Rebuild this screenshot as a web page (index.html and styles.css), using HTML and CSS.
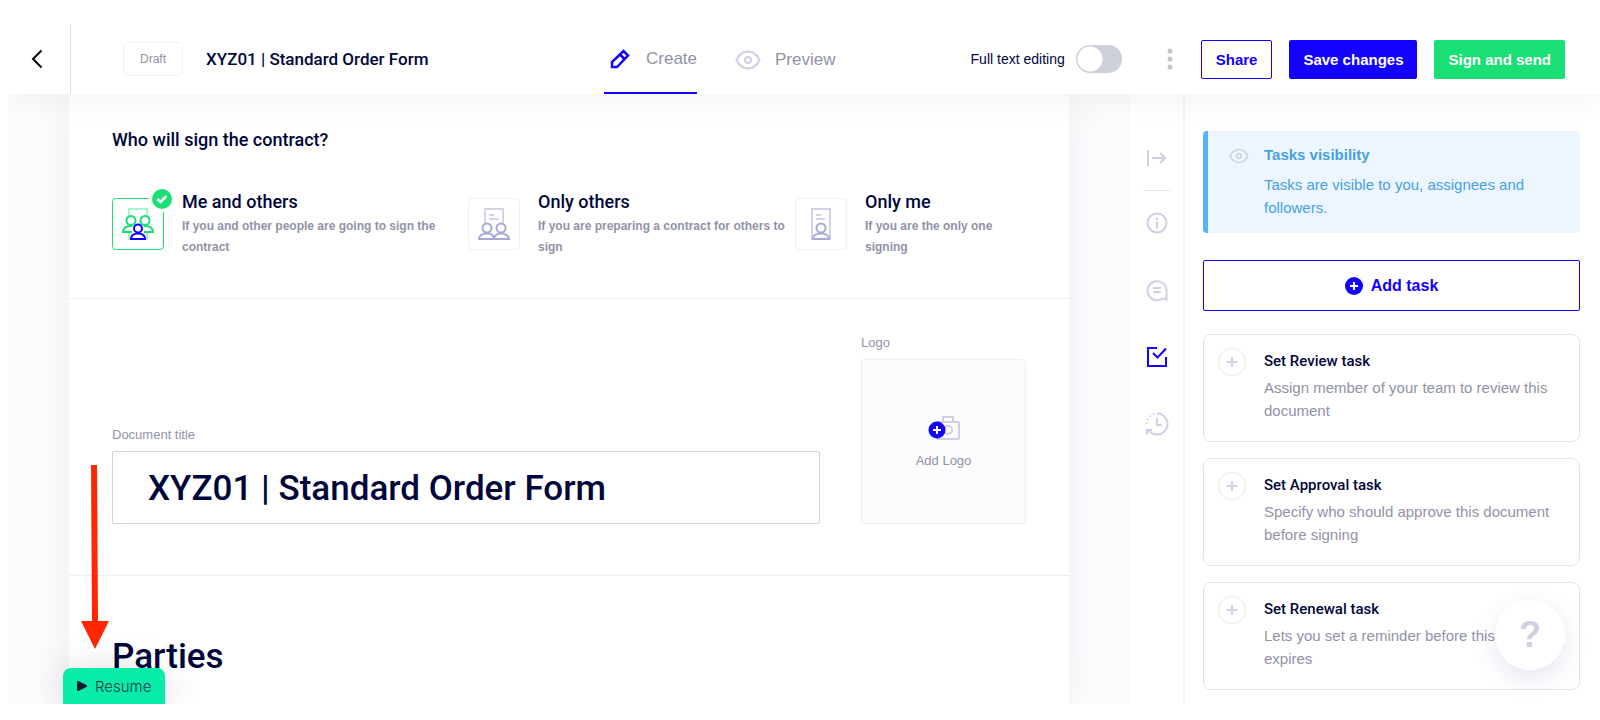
FILE: index.html
```html
<!DOCTYPE html>
<html lang="en">
<head>
    <meta charset="UTF-8">
    <meta name="viewport" content="width=device-width, initial-scale=1.0">
    <title>XYZ01 | Standard Order Form</title>
    <link rel="stylesheet" href="styles.css">
</head>
<body>
<div class="app">
    <header class="topbar">
        <button class="back" aria-label="Back">
            <svg width="12" height="20" viewBox="0 0 12 20" fill="none" stroke="#000" stroke-width="2"><path d="M10.500 1.500 2 10l8.500 8.500"/></svg>
        </button>
        <div class="doc-info">
            <span class="status">Draft</span>
            <span class="doc-name">XYZ01 | Standard Order Form</span>
        </div>
        <nav class="tabs">
            <a class="tab active" href="#create">
                <svg width="20" height="20" viewBox="0 0 20 20" fill="none" stroke="#1400ff" stroke-width="2.500"><path d="M2 18v-5L13.500 2 18 6.500 7 18zM10 5.500l4.500 4.500"/></svg>
                Create
            </a>
            <a class="tab" href="#preview">
                <svg width="26" height="20" viewBox="0 0 26 20" fill="none" stroke="#cfcfe6" stroke-width="2"><path d="M1.500 10C4 4.500 8 1.500 13 1.500S22 4.500 24.500 10C22 15.500 18 18.500 13 18.500S4 15.500 1.500 10z"/><circle cx="13" cy="10" r="3"/></svg>
                Preview
            </a>
        </nav>
        <div class="actions">
            <label class="switch">
                Full text editing
                <input type="checkbox" role="switch">
            </label>
            <button class="more" aria-label="More">
                <svg width="6" height="22" viewBox="0 0 6 22" fill="#c4c4d0"><circle cx="3" cy="3" r="2.500"/><circle cx="3" cy="11" r="2.500"/><circle cx="3" cy="19" r="2.500"/></svg>
            </button>
            <button class="btn btn-outline">Share</button>
            <button class="btn btn-primary">Save changes</button>
            <button class="btn btn-success">Sign and send</button>
        </div>
    </header>

    <div class="workspace">
        <main class="document">
            <section class="section signers">
                <h2>Who will sign the contract?</h2>
                <div class="options">
                    <button class="option selected">
                        <span class="option-icon">
                            <svg width="32" height="32" viewBox="0 0 32 32" fill="none" stroke-width="2">
                                <path stroke="#a3f5cb" d="M7 8V1h18v7M7 25v6h18v-6"/>
                                <g stroke="#1adf75"><circle cx="9" cy="12.500" r="4.500"/><circle cx="23" cy="12.500" r="4.500"/><path d="M10 24H1c0-4 3-6 9-6M22 24h9c0-4-3-6-9-6"/></g>
                                <g stroke="#1400ff" fill="#fff"><circle cx="16" cy="20.500" r="4"/><path d="M9 31c0-4 3-5.500 7-5.500s7 1.500 7 5.500z"/></g>
                            </svg>
                            <svg class="check" width="26" height="26" viewBox="0 0 26 26"><circle cx="13" cy="13" r="13" fill="#fff"/><circle cx="13" cy="13" r="10" fill="#1adf75"/><path d="m8.500 13 3 3 6-6" fill="none" stroke="#fff" stroke-width="2.500"/></svg>
                        </span>
                        <span class="option-text">
                            <span class="option-title">Me and others</span>
                            <span class="option-note">If you and other people are going to sign the contract</span>
                        </span>
                    </button>
                    <button class="option">
                        <span class="option-icon">
                            <svg width="32" height="32" viewBox="0 0 32 32" fill="none" stroke-width="2">
                                <path stroke="#d3d3ea" d="M7 15V1h18v14M11 7h5M11 11h10"/>
                                <g stroke="#a9a9d6"><circle cx="9" cy="20" r="4.500"/><circle cx="23" cy="20" r="4.500"/><path d="M1 31c0-3.500 3.500-5.500 8-5.500s7 2 7 5.500zM16 31c0-3.500 3.500-5.500 7-5.500s8 2 8 5.500z"/></g>
                            </svg>
                        </span>
                        <span class="option-text">
                            <span class="option-title">Only others</span>
                            <span class="option-note">If you are preparing a contract for others to sign</span>
                        </span>
                    </button>
                    <button class="option">
                        <span class="option-icon">
                            <svg width="20" height="32" viewBox="0 0 20 32" fill="none" stroke-width="2">
                                <path stroke="#d3d3ea" d="M1 1h18v30H1zM5 7h5M5 11h9"/>
                                <g stroke="#a9a9d6"><circle cx="10" cy="20" r="4.500"/><path d="M2 31c0-3.500 3.500-5.500 8-5.500s8 2 8 5.500z"/></g>
                            </svg>
                        </span>
                        <span class="option-text">
                            <span class="option-title">Only me</span>
                            <span class="option-note">If you are the only one signing</span>
                        </span>
                    </button>
                </div>
            </section>

            <section class="section heading">
                <div class="title-field">
                    <label for="doc-title">Document title</label>
                    <input id="doc-title" type="text" value="XYZ01 | Standard Order Form">
                </div>
                <div class="logo-field">
                    <span class="logo-label" id="logo-label">Logo</span>
                    <button class="logo-drop" aria-describedby="logo-label">
                        <svg width="32" height="26" viewBox="0 0 32 26">
                            <g fill="none" stroke="#cfcfe6" stroke-width="2"><rect x="9" y="7" width="22" height="17" rx="1"/><path d="M15 7V2h10v5"/><circle cx="20" cy="15" r="4"/></g>
                            <circle cx="9" cy="15" r="8.500" fill="#1400ff"/><path d="M9 11v8M5 15h8" stroke="#fff" stroke-width="2"/>
                        </svg>
                        Add Logo
                    </button>
                </div>
            </section>

            <section class="section parties">
                <h1>Parties</h1>
            </section>
        </main>

        <nav class="rail" aria-label="Panels">
            <button class="rail-item collapse" aria-label="Collapse">
                <svg width="24" height="24" viewBox="0 0 24 24" fill="none" stroke="#cfcfe6" stroke-width="2"><path d="M3 4v16M7 12h13M15 7l5 5-5 5"/></svg>
            </button>
            <button class="rail-item" aria-label="Info">
                <svg width="24" height="24" viewBox="0 0 24 24" fill="none" stroke="#cfcfe6" stroke-width="2"><circle cx="12" cy="12" r="9.500"/><path d="M12 10.500v6.500M12 6.500V9"/></svg>
            </button>
            <button class="rail-item" aria-label="Comments">
                <svg width="24" height="24" viewBox="0 0 24 24" fill="none" stroke="#cfcfe6" stroke-width="2"><path d="M21.500 12v9.500l-4-1A9.500 9.500 0 1 1 21.500 12zM8 10h8M8 14h8"/></svg>
            </button>
            <button class="rail-item" aria-label="Tasks">
                <svg width="24" height="24" viewBox="0 0 24 24" fill="none" stroke="#1400ff" stroke-width="2"><path d="M12 3H3v18h18v-9M8 8l4.500 4.500L21 3.500"/></svg>
            </button>
            <button class="rail-item" aria-label="History">
                <svg width="24" height="24" viewBox="0 0 24 24" fill="none" stroke="#cfcfe6" stroke-width="2"><path d="M12 1.500A10.500 10.500 0 1 1 3 17.500"/><path stroke-dasharray="1.500 2.500" d="M9.500 2A10.500 10.500 0 0 0 2 14"/><path d="M2 22.500V18h5M12 6v7h5"/></svg>
            </button>
        </nav>

        <aside class="panel">
            <div class="notice">
                <svg width="20" height="16" viewBox="0 0 26 20" fill="none" stroke="#cfcfe6" stroke-width="2"><path d="M1.500 10C4 4.500 8 1.500 13 1.500S22 4.500 24.500 10C22 15.500 18 18.500 13 18.500S4 15.500 1.500 10z"/><circle cx="13" cy="10" r="3"/></svg>
                <div>
                    <h3>Tasks visibility</h3>
                    <p>Tasks are visible to you, assignees and followers.</p>
                </div>
            </div>
            <button class="add-task">
                <svg width="18" height="18" viewBox="0 0 18 18"><circle cx="9" cy="9" r="9" fill="#1400ff"/><path d="M9 5v8M5 9h8" stroke="#fff" stroke-width="2"/></svg>
                Add task
            </button>
            <article class="task">
                <button class="task-add" aria-label="Add review task"><svg width="10" height="10" viewBox="0 0 10 10" stroke="#cfcfe6" stroke-width="2"><path d="M5 0v10M0 5h10"/></svg></button>
                <div>
                    <h3>Set Review task</h3>
                    <p>Assign member of your team to review this document</p>
                </div>
            </article>
            <article class="task">
                <button class="task-add" aria-label="Add approval task"><svg width="10" height="10" viewBox="0 0 10 10" stroke="#cfcfe6" stroke-width="2"><path d="M5 0v10M0 5h10"/></svg></button>
                <div>
                    <h3>Set Approval task</h3>
                    <p>Specify who should approve this document before signing</p>
                </div>
            </article>
            <article class="task">
                <button class="task-add" aria-label="Add renewal task"><svg width="10" height="10" viewBox="0 0 10 10" stroke="#cfcfe6" stroke-width="2"><path d="M5 0v10M0 5h10"/></svg></button>
                <div>
                    <h3>Set Renewal task</h3>
                    <p>Lets you set a reminder before this contract expires</p>
                </div>
            </article>
        </aside>
    </div>

    <svg class="arrow" width="28" height="184" viewBox="0 0 28 184"><path d="M10 0h6l1 156h11L14 184 0 156h11z" fill="#ff2600"/></svg>
    <button class="resume">
        <svg width="10" height="10" viewBox="0 0 10 10" fill="#1a1a2e" stroke="#1a1a2e" stroke-width="2" stroke-linejoin="round"><path d="M1 1v8l8-4z"/></svg>
        Resume
    </button>
    <button class="help" aria-label="Help">?</button>
</div>
</body>
</html>
```
FILE: styles.css
```css
* {
    box-sizing: border-box;
}
body {
    margin: 0;
    padding: 24px 0 16px 8px;
    height: 100vh;
    background-color: #fff;
    color: #00063a;
    font-family: "Liberation Sans", Arial, sans-serif;
}
button {
    font-family: inherit;
    color: inherit;
    border: 0;
    padding: 0;
    background: none;
    cursor: pointer;
}
h1, h2, h3, p {
    margin: 0;
}
svg {
    flex: none;
}

.app {
    position: relative;
    display: flex;
    flex-direction: column;
    height: 100%;
    overflow: hidden;
}

/* medium weight titles */
.doc-name, .signers h2, .option-title, .title-field input, .parties h1, .task h3 {
    font-family: Roboto, "Liberation Sans", sans-serif;
    font-weight: 500;
}

/* top bar */
.topbar {
    position: relative;
    z-index: 1;
    display: flex;
    flex: none;
    height: 70px;
    padding-right: 35px;
    background-color: #fff;
    box-shadow: 0 6px 32px rgba(0, 0, 0, 0.05);
}
.back {
    width: 63px;
    padding: 2px 5px 0 0;
    border-right: 1px solid #dedeea;
}
.doc-info {
    display: flex;
    align-items: center;
    gap: 23px;
    width: 533px;
    padding-left: 52px;
}
.status {
    padding: 8px 16px;
    border: 1px solid #f0f0f6;
    border-radius: 5px;
    font-size: 12px;
    line-height: 16px;
    color: #9292a8;
}
.doc-name {
    font-size: 17px;
}
.tabs {
    display: flex;
    gap: 38px;
}
.tab {
    display: flex;
    align-items: center;
    gap: 16px;
    padding-top: 2px;
    font-size: 17px;
    color: #9292a8;
    text-decoration: none;
}
.tab.active {
    padding-left: 6px;
    border-bottom: 2px solid #1400ff;
}
.tab:not(.active) {
    gap: 14px;
}
.actions {
    display: flex;
    align-items: center;
    gap: 17px;
    margin-left: auto;
}
.switch {
    display: flex;
    align-items: center;
    gap: 11px;
    font-size: 14px;
}
.switch input {
    appearance: none;
    width: 46px;
    height: 28px;
    margin: 0 28px 0 0;
    border-radius: 14px;
    background: radial-gradient(circle at 14px 14px, #fff 12px, #cdd0d9 13px);
}
.more {
    margin-right: 11px;
    line-height: 0;
}
.btn {
    height: 39px;
    padding: 0 14px;
    border-radius: 2px;
    font-size: 15px;
    font-weight: bold;
}
.btn-outline {
    border: 1px solid #1400ff;
    color: #1400ff;
}
.btn-primary {
    background-color: #1400ff;
    color: #fff;
}
.btn-success {
    background-color: #1adf75;
    color: #fff;
}

/* document */
.workspace {
    display: flex;
    flex: 1;
    min-height: 0;
    background-color: #fcfcfe;
}
.document {
    flex: 1;
    margin: 0 61px;
    background-color: #fff;
    box-shadow: 0 0 40px rgba(20, 20, 80, 0.06);
}
.section {
    padding: 0 43px;
    border-bottom: 1px solid #eeeef6;
}
.signers {
    height: 205px;
    padding-top: 35px;
}
.signers h2 {
    font-size: 18px;
    line-height: 22px;
}
.options {
    display: grid;
    grid-template-columns: 356px 327px 1fr;
    margin-top: 40px;
}
.option {
    display: flex;
    gap: 18px;
    text-align: left;
}
.option-icon {
    position: relative;
    display: flex;
    flex: none;
    align-items: center;
    justify-content: center;
    width: 52px;
    height: 52px;
    margin-top: 7px;
    border: 1px solid #eeeef8;
    border-radius: 4px;
}
.selected .option-icon {
    border-color: #1adf75;
}
.check {
    position: absolute;
    top: -13px;
    right: -12px;
}
.option-title {
    display: block;
    margin-bottom: 3px;
    font-size: 18px;
    line-height: 22px;
}
.option-note {
    display: block;
    font-size: 12px;
    line-height: 21px;
    font-weight: bold;
    color: #9292a8;
}
.heading {
    display: flex;
    align-items: flex-end;
    gap: 41px;
    height: 277px;
    padding-bottom: 51px;
}
.title-field {
    flex: 1;
}
.title-field label, .logo-label {
    display: block;
    margin-bottom: 8px;
    font-size: 13px;
    line-height: 16px;
    color: #9292a8;
}
.title-field input {
    display: block;
    width: 100%;
    height: 73px;
    padding: 2px 35px 0;
    border: 1px solid #d3d3e6;
    border-radius: 2px;
    font-size: 35px;
    color: #00063a;
}
.logo-drop {
    display: flex;
    flex-direction: column;
    align-items: center;
    justify-content: center;
    gap: 12px;
    width: 165px;
    height: 165px;
    border: 1px solid #eeeef8;
    border-radius: 4px;
    background-color: #fcfcfe;
    font-size: 13px;
    color: #9292a8;
}
.parties {
    padding-top: 61px;
    border: 0;
}
.parties h1 {
    font-size: 35px;
    line-height: 40px;
}

/* side rail */
.rail {
    display: flex;
    flex: none;
    flex-direction: column;
    align-items: center;
    gap: 43px;
    width: 55px;
    padding-top: 52px;
    border-right: 2px solid #f5f5fb;
    background-color: #fff;
}
.rail-item {
    height: 24px;
}
.rail .collapse {
    width: 28px;
    height: 45px;
    margin-bottom: -23px;
    padding-bottom: 21px;
    border-bottom: 1px solid #e6e6f0;
}

/* tasks panel */
.panel {
    flex: none;
    width: 415px;
    padding: 37px 20px 0 18px;
    background-color: #fff;
}
.notice {
    display: flex;
    gap: 15px;
    margin-bottom: 27px;
    padding: 13px 20px 14px 21px;
    border-left: 5px solid #57b4fb;
    border-radius: 4px;
    background-color: #edf6fe;
    color: #47a1e2;
}
.notice svg {
    margin-top: 4px;
}
.notice h3 {
    margin-bottom: 7px;
    font-size: 15px;
    line-height: 22px;
}
.notice p, .task p {
    font-size: 15px;
    line-height: 23px;
}
.add-task {
    display: flex;
    align-items: center;
    justify-content: center;
    gap: 8px;
    width: 100%;
    height: 51px;
    margin-bottom: 23px;
    border: 1px solid #1400ff;
    border-radius: 2px;
    font-size: 16px;
    font-weight: bold;
    color: #1400ff;
}
.task {
    display: flex;
    gap: 18px;
    height: 108px;
    margin-bottom: 16px;
    padding: 13px 20px 0 14px;
    border: 1px solid #e3e5ec;
    border-radius: 8px;
}
.task-add {
    display: flex;
    flex: none;
    align-items: center;
    justify-content: center;
    width: 28px;
    height: 28px;
    border: 1px solid #e6e6ee;
    border-radius: 50%;
}
.task h3 {
    margin-bottom: 2px;
    font-size: 15px;
    line-height: 26px;
}
.task p {
    color: #9292a8;
}

/* things floating over the page */
.arrow {
    position: absolute;
    left: 73px;
    bottom: 55px;
}
.resume {
    position: absolute;
    left: 55px;
    bottom: 0;
    display: flex;
    align-items: center;
    gap: 8px;
    height: 36px;
    padding: 0 14px;
    border-radius: 8px 8px 0 0;
    background-color: #08eba9;
    box-shadow: 0 4px 40px rgba(0, 0, 0, 0.15);
    font-family: Inter, sans-serif;
    font-size: 15px;
    font-weight: 300;
    color: #1a3a4e;
}
.help {
    position: absolute;
    right: 35px;
    bottom: 34px;
    width: 70px;
    height: 70px;
    border-radius: 50%;
    background-color: #fff;
    box-shadow: 0 8px 24px rgba(80, 80, 180, 0.15);
    font-size: 36px;
    font-weight: bold;
    color: #cfcfe6;
}
```
